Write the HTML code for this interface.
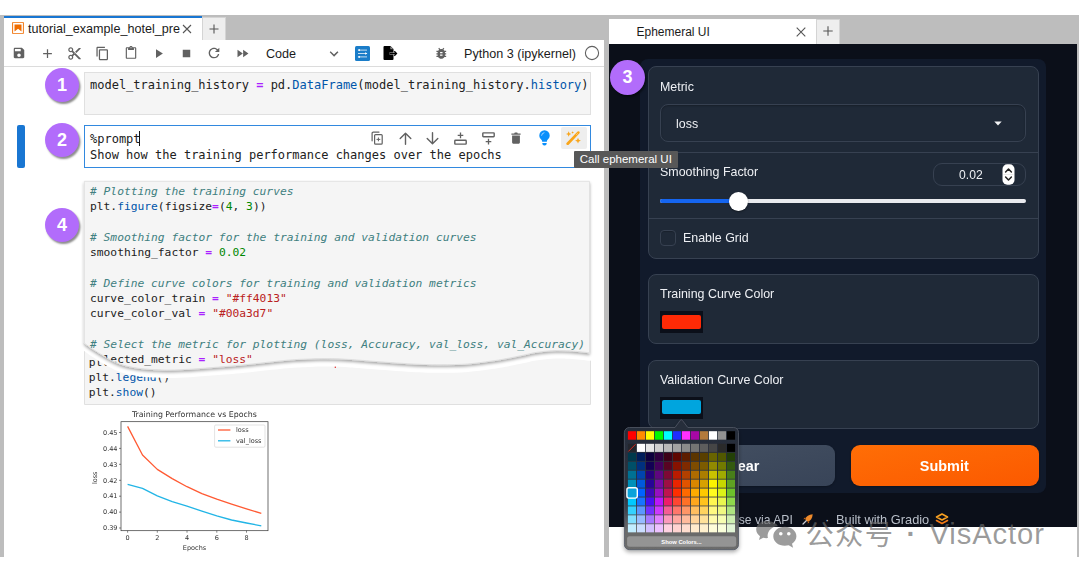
<!DOCTYPE html>
<html lang="en">
<head>
<meta charset="utf-8">
<title>Ephemeral UI</title>
<style>
*{box-sizing:border-box;margin:0;padding:0}
html,body{width:1080px;height:576px;overflow:hidden;background:#fff}
body{position:relative;font-family:"Liberation Sans","Noto Sans CJK SC",sans-serif;color:#212121}
.abs{position:absolute}
#frame{position:absolute;left:0;top:15px;width:1079px;height:542px;background:#bdbdbd;overflow:hidden}
/* ---------- left (JupyterLab) ---------- */
#left{position:absolute;left:4px;top:1px;width:600px;height:541px;background:#fff;overflow:hidden}
#ltabbar{position:absolute;left:0;top:0;width:600px;height:24px;background:#bdbdbd}
#ltab{position:absolute;left:0;top:0;width:198px;height:25px;background:#fff;border-top:2.4px solid #1976d2}
#ltab .ttl{position:absolute;left:24px;top:1.500px;font-size:12.600px;line-height:18px;color:#1b1b1b;white-space:nowrap}
#lplus{position:absolute;left:198px;top:1px;width:24px;height:23px;background:#eee;border:1px solid #d4d4d4;border-bottom:none}
#ltool{position:absolute;left:0;top:24px;width:600px;height:27px;background:#fff;border-bottom:1px solid #dcdcdc}
.tbtxt{position:absolute;font-size:12.600px;line-height:16px;color:#1b1b1b;white-space:nowrap}
.ico{position:absolute;display:block}
.cell{position:absolute;left:80px;width:507px;background:#f5f5f5;border:1px solid #e0e0e0}
.code{position:absolute;font-family:"DejaVu Sans Mono","Liberation Mono",monospace;font-size:12px;line-height:15.25px;white-space:pre;color:#212121;letter-spacing:0px}
.c3{font-size:11.270px}
.c{color:#408080;font-style:italic}
.o{color:#aa22ff;font-weight:bold}
.p{color:#0055aa}
.n{color:#008800}
.s{color:#ba2121}
.badge{position:absolute;width:34px;height:34px;border-radius:50%;background:#b26cfb;color:#fff;font-weight:bold;font-size:18px;line-height:35px;text-align:center;box-shadow:1.5px 2px 2px rgba(0,0,0,.45)}
/* ---------- right (Gradio) ---------- */
#right{position:absolute;left:609px;top:4px;width:468px;height:538px;background:#fff;overflow:hidden}
#rtabbar{position:absolute;left:0;top:0;width:468px;height:25px;background:#bdbdbd}
#rtab{position:absolute;left:0;top:0;width:207px;height:25px;background:#fff}
#rtab .ttl{position:absolute;left:27.500px;top:3.500px;font-size:12px;line-height:18px;color:#1b1b1b;white-space:nowrap}
#rplus{position:absolute;left:207px;top:0px;width:24px;height:25px;background:#eee;border:1px solid #d4d4d4;border-bottom:none}
#gr{position:absolute;left:0;top:24.500px;width:468px;height:483px;background:#0b0f19;overflow:hidden;color:#f3f4f6}
#gform{position:absolute;left:31px;top:15.200px;width:405.500px;height:434.300px;background:#111a2b;border-radius:8px}
.blk{position:absolute;left:7.500px;width:391.300px;background:#1f2937;border:1px solid #374151;border-radius:8px}
.hr{position:absolute;left:0;width:100%;height:1px;background:#374151}
.lbl{position:absolute;left:11.200px;font-size:13.300px;line-height:18px;color:#eef0f4;white-space:nowrap;transform:scaleX(.935);transform-origin:0 50%}
.gbtn{position:absolute;height:41.200px;border-radius:9px;color:#fff;font-weight:bold;font-size:15.500px;line-height:41.600px;text-align:center;box-shadow:0 1px 2px rgba(0,0,0,.25)}
.gbtn span{display:inline-block;transform:scaleX(.93)}
</style>
</head>
<body>
<div id="frame">
  <div id="left">
    <div id="ltabbar">
      <div id="ltab">
        <svg class="ico" style="left:7px;top:3px" width="14" height="14" viewBox="0 0 22 22"><path fill="#ef6c00" d="M18.7 3.3v15.4H3.3V3.3h15.4m1.5-1.5H1.8v18.3h18.3l.1-18.3z"/><path fill="#ef6c00" d="M16.5 16.5l-5.4-4.3-5.6 4.3v-11h11z"/></svg>
        <span class="ttl">tutorial_example_hotel_pre</span>
        <svg class="ico" style="left:178px;top:6px" width="10" height="10" viewBox="0 0 10 10"><path d="M1 1L9 9M9 1L1 9" stroke="#555" stroke-width="1.1" fill="none"/></svg>
      </div>
      <div id="lplus"><svg class="ico" style="left:6px;top:6px" width="10" height="10" viewBox="0 0 10 10"><path d="M5 .5V9.5M.5 5H9.5" stroke="#555" stroke-width="1.1" fill="none"/></svg></div>
    </div>
    <div id="ltool">
      <svg class="ico" style="left:8px;top:6px" width="14" height="14" viewBox="0 0 24 24"><path fill="#616161" d="M17 3H5c-1.11 0-2 .9-2 2v14c0 1.1.89 2 2 2h14c1.1 0 2-.9 2-2V7l-4-4zm-5 16c-1.66 0-3-1.34-3-3s1.34-3 3-3 3 1.34 3 3-1.34 3-3 3zm3-10H5V5h10v4z"/></svg>
      <svg class="ico" style="left:35.5px;top:5.5px" width="15" height="15" viewBox="0 0 24 24"><path fill="#616161" d="M19 13h-6v6h-2v-6H5v-2h6V5h2v6h6v2z"/></svg>
      <svg class="ico" style="left:63px;top:5.5px" width="15" height="15" viewBox="0 0 24 24"><path fill="#616161" d="M9.64 7.64c.23-.5.36-1.05.36-1.64 0-2.21-1.79-4-4-4S2 3.790 2 6s1.79 4 4 4c.59 0 1.14-.13 1.64-.36L10 12l-2.36 2.360C7.14 14.13 6.590 14 6 14c-2.21 0-4 1.79-4 4s1.79 4 4 4 4-1.79 4-4c0-.59-.13-1.14-.36-1.64L12 14l7 7h3v-1L9.640 7.640zM6 8c-1.1 0-2-.89-2-2s.9-2 2-2 2 .89 2 2-.9 2-2 2zm0 12c-1.1 0-2-.89-2-2s.9-2 2-2 2 .89 2 2-.9 2-2 2zm6-7.5c-.28 0-.5-.22-.5-.5s.22-.5.5-.5.5.22.5.5-.22.5-.5.5zM19 3l-6 6 2 2 7-7V3z"/></svg>
      <svg class="ico" style="left:90.5px;top:5.5px" width="15" height="15" viewBox="0 0 18 18"><path fill="#616161" d="M11.9,1H3.2C2.4,1,1.7,1.7,1.7,2.5v10.2h1.500V2.5h8.7V1z M14.100,3.900h-8c-0.800,0-1.500,0.700-1.500,1.500v10.200c0,0.800,0.700,1.500,1.500,1.500h8 c0.800,0,1.500-0.700,1.500-1.500V5.400C15.500,4.600,14.900,3.900,14.100,3.900z M14.100,15.500h-8V5.400h8V15.500z"/></svg>
      <svg class="ico" style="left:119.5px;top:6px" width="14" height="14" viewBox="0 0 24 24"><path fill="#616161" d="M19 2h-4.180C14.4.84 13.3 0 12 0c-1.300 0-2.400.84-2.820 2H5c-1.100 0-2 .9-2 2v16c0 1.100.9 2 2 2h14c1.100 0 2-.9 2-2V4c0-1.100-.9-2-2-2zm-7 0c.55 0 1 .45 1 1s-.45 1-1 1-1-.45-1-1 .45-1 1-1zm7 18H5V4h2v3h10V4h2v16z"/></svg>
      <svg class="ico" style="left:146.5px;top:5.5px" width="15" height="15" viewBox="0 0 24 24"><path fill="#616161" d="M8 5v14l11-7z"/></svg>
      <svg class="ico" style="left:174.5px;top:5.5px" width="15" height="15" viewBox="0 0 24 24"><path fill="#616161" d="M6 6h12v12H6z"/></svg>
      <svg class="ico" style="left:201.7px;top:5px" width="16" height="16" viewBox="0 0 18 18"><path fill="#616161" d="M9 13.5c-2.490 0-4.500-2.010-4.500-4.500S6.510 4.500 9 4.500c1.240 0 2.360.52 3.170 1.330L10 8h5V3l-1.760 1.760C12.150 3.680 10.660 3 9 3 5.690 3 3.010 5.690 3.010 9S5.690 15 9 15c2.970 0 5.430-2.160 5.900-5h-1.520c-.46 2-2.240 3.500-4.380 3.500z"/></svg>
      <svg class="ico" style="left:230.5px;top:5.5px" width="15" height="15" viewBox="0 0 24 24"><path fill="#616161" d="M4 18l8.500-6L4 6v12zm9-12v12l8.500-6L13 6z"/></svg>
      <span class="tbtxt" style="left:262px;top:6px">Code</span>
      <svg class="ico" style="left:322.3px;top:5.5px" width="16" height="16" viewBox="0 0 18 18"><path fill="#616161" d="M5.2,5.900L9,9.700l3.800-3.800l1.200,1.200l-4.900,5l-4.900-5L5.200,5.900z"/></svg>
      <svg class="ico" style="left:350.5px;top:5.5px" width="15" height="15" viewBox="0 0 15 15"><rect width="15" height="15" rx="1.5" fill="#1a7dc9"/><g stroke="#fff" stroke-width=".75" fill="none"><path d="M3 4.100H12M3 7.500H12M3 10.900H12"/></g><path fill="#fff" d="M2.600 4.100l2.300-1.150v2.300zM12.400 7.500l-2.300-1.150v2.300zM2.600 10.900l2.300-1.150v2.300z"/></svg>
      <svg class="ico" style="left:378px;top:5px" width="16" height="16" viewBox="0 0 16 16"><path fill="#000" d="M2.500 1h6l3 3v3.500H7.500v2H11.500V14a1 1 0 0 1-1 1h-8a1 1 0 0 1-1-1V2a1 1 0 0 1 1-1z"/><path fill="#fff" d="M8.300 1.300v3h3z" opacity=".55"/><path d="M7.500 8.500H14.300M12.300 6.300l2.200 2.200-2.200 2.200" stroke="#000" stroke-width="1.300" fill="none"/></svg>
      <svg class="ico" style="left:429.700px;top:5.700px" width="14.600" height="14.600" viewBox="0 0 24 24"><path fill="#616161" d="M20 8h-2.810c-.45-.78-1.070-1.450-1.820-1.960L17 4.410 15.590 3l-2.170 2.170C12.960 5.060 12.490 5 12 5c-.49 0-.96.06-1.410.17L8.410 3 7 4.410l1.620 1.630C7.880 6.550 7.260 7.220 6.810 8H4v2h2.090c-.05.33-.09.66-.09 1v1H4v2h2v1c0 .34.04.67.09 1H4v2h2.810c1.040 1.790 2.970 3 5.190 3s4.150-1.210 5.190-3H20v-2h-2.090c.05-.33.09-.66.09-1v-1h2v-2h-2v-1c0-.34-.04-.67-.09-1H20V8zm-6 8h-4v-2h4v2zm0-4h-4v-2h4v2z"/></svg>
      <span class="tbtxt" style="left:460px;top:6px">Python 3 (ipykernel)</span>
      <svg class="ico" style="left:580px;top:5px" width="16" height="16" viewBox="0 0 16 16"><circle cx="8" cy="8" r="6.600" fill="none" stroke="#616161" stroke-width="1.100"/></svg>
    </div>
    <!-- cell 1 -->
    <div class="cell" style="top:56px;height:43px"></div>
    <div class="code" style="left:86px;top:62px">model_training_history <span class="o">=</span> pd.<span class="p">DataFrame</span>(model_training_history.<span class="p">history</span>)</div>
    <div class="badge" style="left:41px;top:52px">1</div>
    <!-- cell 2 (active) -->
    <div class="abs" style="left:13px;top:109px;width:8px;height:43px;background:#1976d2;border-radius:2px"></div>
    <div class="cell" style="top:109px;height:43px;background:#fff;border-color:#3289df"></div>
    <div class="code" style="left:86px;top:115px;line-height:16.400px">%prompt
Show how the training performance changes over the epochs</div>
    <div class="abs" style="left:135px;top:115px;width:1px;height:15px;background:#111"></div>
    <div class="badge" style="left:41px;top:107px">2</div>
    <div class="abs" style="left:557px;top:111.300px;width:25.700px;height:21.400px;background:#eee;border-radius:2px"></div>
    <svg class="ico" style="left:367.3px;top:115.3px" width="12" height="14" viewBox="0 0 12 14"><path d="M1.100 9.800V2.200A1.100 1.100 0 0 1 2.200 1.100H8" fill="none" stroke="#616161" stroke-width="1.200" stroke-linecap="round"/><rect x="3.600" y="3.600" width="7.600" height="9.600" rx="1" fill="none" stroke="#616161" stroke-width="1.200"/><path d="M7.400 6.500V10.300M5.500 8.400H9.300" stroke="#616161" stroke-width="1" fill="none"/></svg>
    <svg class="ico" style="left:394.5px;top:115.7px" width="13" height="13" viewBox="0 0 13 13"><path d="M6.500 12.300V1.500M1.200 6.600L6.500 1.300L11.800 6.600" fill="none" stroke="#616161" stroke-width="1.400" stroke-linecap="round" stroke-linejoin="round"/></svg>
    <svg class="ico" style="left:422.3px;top:115.7px" width="13" height="13" viewBox="0 0 13 13"><path d="M6.500 .7V11.500M1.200 6.400L6.500 11.700L11.800 6.400" fill="none" stroke="#616161" stroke-width="1.400" stroke-linecap="round" stroke-linejoin="round"/></svg>
    <svg class="ico" style="left:450.2px;top:116.2px" width="13" height="13" viewBox="0 0 13 13"><path d="M6.500 .6V6.200M3.700 3.400H9.300" stroke="#616161" stroke-width="1.300" fill="none"/><rect x=".8" y="8.300" width="11.400" height="3.800" rx=".6" fill="none" stroke="#616161" stroke-width="1.400"/></svg>
    <svg class="ico" style="left:477.9px;top:116.3px" width="13" height="13" viewBox="0 0 13 13"><path d="M6.500 6.800V12.400M3.700 9.600H9.300" stroke="#616161" stroke-width="1.300" fill="none"/><rect x=".8" y=".9" width="11.400" height="3.800" rx=".6" fill="none" stroke="#616161" stroke-width="1.400"/></svg>
    <svg class="ico" style="left:507.3px;top:116.0px" width="10" height="12" viewBox="0 0 10 12"><path fill="#616161" d="M.4 1.500H3.200L3.800 .6H6.200L6.800 1.500H9.600V2.700H.4Z"/><path fill="#616161" d="M1.100 3.500H8.900V10.600A1.100 1.100 0 0 1 7.800 11.700H2.200A1.100 1.100 0 0 1 1.100 10.600Z"/></svg>
    <svg class="ico" style="left:534.5px;top:114.3px" width="11" height="16" viewBox="0 0 11 16"><path fill="#0a8ffb" d="M5.500 .3A5.200 5.200 0 0 0 .3 5.500C.3 7.300 1.200 8.700 2.400 9.700C2.900 10.200 3.100 10.700 3.100 11.300V11.800H7.900V11.300C7.900 10.700 8.100 10.200 8.600 9.700C9.800 8.700 10.700 7.300 10.700 5.500A5.200 5.200 0 0 0 5.500 .3Z"/><path fill="#0a8ffb" d="M3.300 13H7.700V13.600A2 2 0 0 1 5.700 15.500H5.300A2 2 0 0 1 3.300 13.600Z"/><path d="M2.600 5.300A2.900 2.900 0 0 1 5 2.700" stroke="#cfe9ff" stroke-width=".9" fill="none" stroke-linecap="round" opacity=".85"/></svg>
    <svg class="ico" style="left:561.8px;top:115.3px" width="15" height="14" viewBox="0 0 15 14"><path d="M1.700 12.700L12.300 1.600" stroke="#f9a51a" stroke-width="2.700" stroke-linecap="round" fill="none"/><path d="M10.300 3.800L11.600 2.400" stroke="#fff" stroke-width=".7" fill="none" opacity=".7"/><path fill="#f9a51a" d="M2.700 .3L3.500 2.200L5.400 3L3.500 3.800L2.700 5.700L1.900 3.800L0 3L1.900 2.200Z"/><path fill="#f9a51a" d="M6.600 .2L7 1.100L7.900 1.500L7 1.900L6.600 2.800L6.200 1.900L5.300 1.500L6.200 1.100Z"/><path fill="#f9a51a" d="M12 6.800L12.850 8.850L14.900 9.700L12.850 10.550L12 12.600L11.150 10.550L9.100 9.700L11.150 8.850Z"/></svg>
    <!-- cell 3 bottom sheet -->
    <svg class="ico" style="left:-4px;top:-16px" width="608" height="560" viewBox="0 0 608 560"><path d="M84.5 346H590.5V404.5H84.5Z" fill="#f5f5f5" stroke="#e0e0e0" stroke-width="1"/></svg>
    <div class="code c3" style="left:84.700px;top:338.800px" id="codeB">plt.<span class="p">plot</span>(history_df)
plt.<span class="p">legend</span>()
plt.<span class="p">show</span>()</div>
    <!-- cell 3 top sheet -->
    <svg class="ico" style="left:-4px;top:-16px" width="608" height="560" viewBox="0 0 608 560">
      <defs><filter id="sh" x="-5%" y="-5%" width="110%" height="115%"><feGaussianBlur in="SourceAlpha" stdDeviation="1.400"/><feOffset dx="0" dy="1.700"/><feComponentTransfer><feFuncA type="linear" slope="0.34"/></feComponentTransfer><feMerge><feMergeNode/><feMergeNode in="SourceGraphic"/></feMerge></filter></defs>
      <path d="M80 340V352L84.3 351.0C85.2 351.7 87.7 353.7 90.0 355.3C92.3 356.9 95.7 358.9 98.0 360.4C100.3 361.8 101.2 362.4 104.0 364.0C106.8 365.6 111.5 368.4 115.0 370.0C118.5 371.6 121.3 372.6 125.0 373.6C128.7 374.6 132.2 375.3 137.0 376.0C141.8 376.7 148.5 377.3 154.0 377.6C159.5 377.9 164.0 378.1 170.0 378.0C176.0 377.9 182.5 377.6 190.0 377.2C197.5 376.8 205.8 376.1 215.0 375.3C224.2 374.6 233.0 373.9 245.0 372.7C257.0 371.5 276.2 369.2 287.0 368.2C297.8 367.2 303.0 367.2 310.0 366.9C317.0 366.6 322.3 366.5 329.0 366.6C335.7 366.7 343.2 367.0 350.0 367.4C356.8 367.8 359.7 368.2 370.0 369.0C380.3 369.8 400.3 371.3 412.0 371.9C423.7 372.5 430.7 372.7 440.0 372.7C449.3 372.7 459.7 372.5 468.0 371.9C476.3 371.3 484.3 369.9 490.0 369.2C495.7 368.4 496.3 368.4 502.0 367.4C507.7 366.4 518.3 364.2 524.0 363.0C529.7 361.8 531.3 361.1 536.0 360.4C540.7 359.7 546.5 359.0 552.0 358.7C557.5 358.4 564.3 358.6 569.0 358.8C573.7 359.0 576.6 359.4 580.0 359.7C583.4 360.0 587.9 360.6 589.5 360.8L600 360V340Z" fill="#fff"/>
      <circle cx="335.300" cy="367.200" r="0.700" fill="#e02020"/>
      <path d="M84.300 181.300V343L84.3 343.0C85.2 343.7 87.7 345.7 90.0 347.3C92.3 348.9 95.7 350.9 98.0 352.4C100.3 353.8 101.2 354.4 104.0 356.0C106.8 357.6 111.5 360.4 115.0 362.0C118.5 363.6 121.3 364.6 125.0 365.6C128.7 366.6 132.2 367.3 137.0 368.0C141.8 368.7 148.5 369.3 154.0 369.6C159.5 369.9 164.0 370.1 170.0 370.0C176.0 369.9 182.5 369.6 190.0 369.2C197.5 368.8 205.8 368.1 215.0 367.3C224.2 366.6 233.0 365.9 245.0 364.7C257.0 363.5 276.2 361.2 287.0 360.2C297.8 359.2 303.0 359.2 310.0 358.9C317.0 358.6 322.3 358.5 329.0 358.6C335.7 358.7 343.2 359.0 350.0 359.4C356.8 359.8 359.7 360.2 370.0 361.0C380.3 361.8 400.3 363.3 412.0 363.9C423.7 364.5 430.7 364.7 440.0 364.7C449.3 364.7 459.7 364.5 468.0 363.9C476.3 363.3 484.3 361.9 490.0 361.2C495.7 360.4 496.3 360.4 502.0 359.4C507.7 358.4 518.3 356.2 524.0 355.0C529.7 353.8 531.3 353.1 536.0 352.4C540.7 351.7 546.5 351.0 552.0 350.7C557.5 350.4 564.3 350.6 569.0 350.8C573.7 351.0 576.6 351.4 580.0 351.7C583.4 352.0 587.9 352.6 589.5 352.8V181.300Z" fill="#f5f5f5" stroke="#dedede" stroke-width="0.800" filter="url(#sh)"/>
    </svg>
    <div class="abs" style="left:-4px;top:-16px;width:608px;height:560px;clip-path:path('M84.300 181.300V343L84.3 343.0C85.2 343.7 87.7 345.7 90.0 347.3C92.3 348.9 95.7 350.9 98.0 352.4C100.3 353.8 101.2 354.4 104.0 356.0C106.8 357.6 111.5 360.4 115.0 362.0C118.5 363.6 121.3 364.6 125.0 365.6C128.7 366.6 132.2 367.3 137.0 368.0C141.8 368.7 148.5 369.3 154.0 369.6C159.5 369.9 164.0 370.1 170.0 370.0C176.0 369.9 182.5 369.6 190.0 369.2C197.5 368.8 205.8 368.1 215.0 367.3C224.2 366.6 233.0 365.9 245.0 364.7C257.0 363.5 276.2 361.2 287.0 360.2C297.8 359.2 303.0 359.2 310.0 358.9C317.0 358.6 322.3 358.5 329.0 358.6C335.7 358.7 343.2 359.0 350.0 359.4C356.8 359.8 359.7 360.2 370.0 361.0C380.3 361.8 400.3 363.3 412.0 363.9C423.7 364.5 430.7 364.7 440.0 364.7C449.3 364.7 459.7 364.5 468.0 363.9C476.3 363.3 484.3 361.9 490.0 361.2C495.7 360.4 496.3 360.4 502.0 359.4C507.7 358.4 518.3 356.2 524.0 355.0C529.7 353.8 531.3 353.1 536.0 352.4C540.7 351.7 546.5 351.0 552.0 350.7C557.5 350.4 564.3 350.6 569.0 350.8C573.7 351.0 576.6 351.4 580.0 351.7C583.4 352.0 587.9 352.6 589.5 352.8V181.300Z')"><div class="code c3" style="left:90px;top:184.100px" id="codeA"><span class="c"># Plotting the training curves</span>
plt.<span class="p">figure</span>(figsize<span class="o">=</span>(<span class="n">4</span>, <span class="n">3</span>))

<span class="c"># Smoothing factor for the training and validation curves</span>
smoothing_factor <span class="o">=</span> <span class="n">0.02</span>

<span class="c"># Define curve colors for training and validation metrics</span>
curve_color_train <span class="o">=</span> <span class="s">"#ff4013"</span>
curve_color_val <span class="o">=</span> <span class="s">"#00a3d7"</span>

<span class="c"># Select the metric for plotting (loss, Accuracy, val_loss, val_Accuracy)</span>
selected_metric <span class="o">=</span> <span class="s">"loss"</span></div></div>
    <div class="badge" style="left:41px;top:192px">4</div>
    <svg class="ico" style="left:-4px;top:-16px;filter:blur(.35px)" width="608" height="560" viewBox="0 0 608 560">
      <rect x="121" y="421.700" width="147" height="109" fill="#fff" stroke="#333" stroke-width=".7"/>
      <polyline points="127.6,426.4 142.5,455.0 157.3,469.4 172.2,478.6 187.0,486.7 201.9,493.6 216.8,499.2 231.6,504.2 246.5,508.9 261.3,513.3" fill="none" stroke="#ff5a33" stroke-width="1.300" stroke-linejoin="round"/>
      <polyline points="127.6,484.4 142.5,488.3 157.3,495.8 172.2,501.7 187.0,506.1 201.9,511.1 216.8,515.8 231.6,520.0 246.5,523.0 261.3,525.8" fill="none" stroke="#22b5e6" stroke-width="1.300" stroke-linejoin="round"/>
      <path d="M119 432.5H121" stroke="#333" stroke-width=".6"/>
      <text x="117.500" y="434.7" text-anchor="end" font-size="6.500" fill="#333" font-family="DejaVu Sans, Liberation Sans, sans-serif">0.45</text>
      <path d="M119 448.4H121" stroke="#333" stroke-width=".6"/>
      <text x="117.500" y="450.6" text-anchor="end" font-size="6.500" fill="#333" font-family="DejaVu Sans, Liberation Sans, sans-serif">0.44</text>
      <path d="M119 464.3H121" stroke="#333" stroke-width=".6"/>
      <text x="117.500" y="466.5" text-anchor="end" font-size="6.500" fill="#333" font-family="DejaVu Sans, Liberation Sans, sans-serif">0.43</text>
      <path d="M119 480.3H121" stroke="#333" stroke-width=".6"/>
      <text x="117.500" y="482.5" text-anchor="end" font-size="6.500" fill="#333" font-family="DejaVu Sans, Liberation Sans, sans-serif">0.42</text>
      <path d="M119 496.2H121" stroke="#333" stroke-width=".6"/>
      <text x="117.500" y="498.4" text-anchor="end" font-size="6.500" fill="#333" font-family="DejaVu Sans, Liberation Sans, sans-serif">0.41</text>
      <path d="M119 512.1H121" stroke="#333" stroke-width=".6"/>
      <text x="117.500" y="514.3" text-anchor="end" font-size="6.500" fill="#333" font-family="DejaVu Sans, Liberation Sans, sans-serif">0.40</text>
      <path d="M119 528.0H121" stroke="#333" stroke-width=".6"/>
      <text x="117.500" y="530.2" text-anchor="end" font-size="6.500" fill="#333" font-family="DejaVu Sans, Liberation Sans, sans-serif">0.39</text>
      <path d="M127.6 530.700V532.700" stroke="#333" stroke-width=".6"/>
      <text x="127.6" y="540.300" text-anchor="middle" font-size="6.500" fill="#333" font-family="DejaVu Sans, Liberation Sans, sans-serif">0</text>
      <path d="M157.3 530.700V532.700" stroke="#333" stroke-width=".6"/>
      <text x="157.3" y="540.300" text-anchor="middle" font-size="6.500" fill="#333" font-family="DejaVu Sans, Liberation Sans, sans-serif">2</text>
      <path d="M187.0 530.700V532.700" stroke="#333" stroke-width=".6"/>
      <text x="187.0" y="540.300" text-anchor="middle" font-size="6.500" fill="#333" font-family="DejaVu Sans, Liberation Sans, sans-serif">4</text>
      <path d="M216.8 530.700V532.700" stroke="#333" stroke-width=".6"/>
      <text x="216.8" y="540.300" text-anchor="middle" font-size="6.500" fill="#333" font-family="DejaVu Sans, Liberation Sans, sans-serif">6</text>
      <path d="M246.5 530.700V532.700" stroke="#333" stroke-width=".6"/>
      <text x="246.5" y="540.300" text-anchor="middle" font-size="6.500" fill="#333" font-family="DejaVu Sans, Liberation Sans, sans-serif">8</text>
      <text x="194.400" y="417.300" text-anchor="middle" font-size="7.850" fill="#333" font-family="DejaVu Sans, Liberation Sans, sans-serif">Training Performance vs Epochs</text>
      <text x="194.500" y="550.200" text-anchor="middle" font-size="6.500" fill="#333" font-family="DejaVu Sans, Liberation Sans, sans-serif">Epochs</text>
      <text transform="translate(97.200 477.800) rotate(-90)" text-anchor="middle" font-size="6.500" fill="#333" font-family="DejaVu Sans, Liberation Sans, sans-serif">loss</text>
      <rect x="214.600" y="425" width="50.400" height="22.200" rx="1.200" fill="#fff" stroke="#d0d0d0" stroke-width=".6"/>
      <path d="M218 430H230.400" stroke="#ff5a33" stroke-width="1.300"/><path d="M218 440.800H230.400" stroke="#22b5e6" stroke-width="1.300"/>
      <text x="236" y="432.200" font-size="6.500" fill="#333" font-family="DejaVu Sans, Liberation Sans, sans-serif">loss</text><text x="236" y="443" font-size="6.500" fill="#333" font-family="DejaVu Sans, Liberation Sans, sans-serif">val_loss</text>
    </svg>
  </div>
  <div id="right">
    <div id="rtabbar">
      <div id="rtab"><span class="ttl">Ephemeral UI</span>
        <svg class="ico" style="left:186.500px;top:7.500px" width="10" height="10" viewBox="0 0 10 10"><path d="M.7 .7L9.300 9.300M9.300 .7L.7 9.300" stroke="#555" stroke-width="1.100" fill="none"/></svg>
      </div>
      <div id="rplus"><svg class="ico" style="left:6px;top:6px" width="10" height="10" viewBox="0 0 10 10"><path d="M5 .3V9.700M.3 5H9.700" stroke="#555" stroke-width="1.100" fill="none"/></svg></div>
    </div>
    <div id="gr">
      <div id="gform">
        <div class="blk" style="top:7.3px;height:193px">
          <span class="lbl" style="top:11.0px">Metric</span>
          <div class="abs" style="left:11.500px;top:37.5px;width:365.500px;height:37.500px;border:1px solid #374151;border-radius:8px;background:#1f2937;box-shadow:inset 0 1px 2px rgba(0,0,0,.25)"></div>
          <span class="lbl" style="left:27.500px;top:47.7px">loss</span>
          <svg class="ico" style="left:345px;top:54.2px" width="8" height="5" viewBox="0 0 8 5"><path d="M.3 .5H7.700L4 4.600Z" fill="#f3f4f6"/></svg>
          <div class="hr" style="top:85.0px"></div>
          <span class="lbl" style="top:96.5px">Smoothing Factor</span>
          <div class="abs" style="left:284px;top:96.0px;width:93px;height:23.400px;border:1px solid #374151;border-radius:9px;background:#1f2937"></div>
          <span class="lbl" style="left:310.500px;top:99.0px;font-size:13px">0.02</span>
          <svg class="ico" style="left:353.500px;top:97.0px" width="13" height="21" viewBox="0 0 13 21"><rect x=".5" y=".3" width="12" height="20.400" rx="4.800" fill="#fff"/><path d="M1.500 10.500H11.500" stroke="#ddd" stroke-width=".6"/><path d="M3.600 8L6.500 5L9.400 8M3.600 13L6.500 16L9.400 13" fill="none" stroke="#222" stroke-width="1.500" stroke-linecap="round" stroke-linejoin="round"/></svg>
          <div class="abs" style="left:11.500px;top:132.0px;width:365.500px;height:4.400px;border-radius:3px;background:#e9eaee"></div>
          <div class="abs" style="left:11.500px;top:132.0px;width:80px;height:4.400px;border-radius:3px;background:#1565f0"></div>
          <div class="abs" style="left:80.8px;top:124.8px;width:18.800px;height:18.800px;border-radius:50%;background:#fff;box-shadow:0 1px 2px rgba(0,0,0,.4)"></div>
          <div class="hr" style="top:151.0px"></div>
          <div class="abs" style="left:11.500px;top:163.5px;width:15.500px;height:15.500px;border:1px solid #374151;border-radius:4px;background:#1f2937;box-shadow:inset 0 1px 1px rgba(0,0,0,.2)"></div>
          <span class="lbl" style="left:34.700px;top:162.0px">Enable Grid</span>
        </div>
        <div class="blk" style="top:215.8px;height:69.300px">
          <span class="lbl" style="top:10.0px">Training Curve Color</span>
          <div class="abs" style="left:11.500px;top:35.5px;width:42.500px;height:22px;background:#0b0f19"></div>
          <div class="abs" style="left:13.300px;top:39.5px;width:39.200px;height:14px;background:#ff2a06;border-radius:2px"></div>
        </div>
        <div class="blk" style="top:301.3px;height:69px">
          <span class="lbl" style="top:10.0px">Validation Curve Color</span>
          <div class="abs" style="left:11.500px;top:35.8px;width:42.500px;height:22px;background:#0b0f19"></div>
          <div class="abs" style="left:13.300px;top:39.3px;width:39.200px;height:14px;background:#00a5de;border-radius:2px"></div>
        </div>
        <div class="gbtn" style="left:7.500px;top:386.3px;width:187.500px;background:linear-gradient(to bottom right,#445062,#384458)"><span>Clear</span></div>
        <div class="gbtn" style="left:210.500px;top:386.3px;width:188.300px;background:linear-gradient(to bottom right,#ff6e06,#fb5900)"><span>Submit</span></div>
      </div>
      <div class="badge" style="left:1px;top:16px;width:35px;height:35px">3</div>
      <div class="abs" style="left:120.500px;top:467px;font-size:13px;line-height:18px;color:#b9bfc9;white-space:nowrap;transform:scaleX(.935);transform-origin:0 50%">Use via API</div>
      <svg class="ico" style="left:192px;top:469px" width="13" height="13" viewBox="0 0 13 13"><path d="M2 11L5.500 7.500" stroke="#c9ccd2" stroke-width="1.300" stroke-linecap="round"/><path d="M4.200 6.200L6.800 8.800C9.500 8 11.500 5.500 11.700 1.300C8 1.500 5 3.500 4.200 6.200Z" fill="#ef8a2b"/><path d="M4.400 6L2.300 6.300L4.200 4.300ZM7 8.600L6.700 10.700L8.700 8.800Z" fill="#d96a12"/></svg>
      <div class="abs" style="left:216px;top:467px;font-size:13px;line-height:18px;color:#b9bfc9">·</div>
      <div class="abs" style="left:227px;top:467px;font-size:13px;line-height:18px;color:#b9bfc9;white-space:nowrap;transform:scaleX(.985);transform-origin:0 50%">Built with Gradio</div>
      <svg class="ico" style="left:326px;top:469.500px" width="14" height="13" viewBox="0 0 14 13"><path d="M7 1L12.500 4L7 7L1.500 4Z" fill="none" stroke="#f7a022" stroke-width="1.600" stroke-linejoin="round"/><path d="M1.500 7.500L7 10.500L12.500 7.500" fill="none" stroke="#f37a16" stroke-width="1.600" stroke-linejoin="round" stroke-linecap="round"/></svg>
    </div>
  </div>
<div class="abs" style="left:574.200px;top:135.600px;width:103.600px;height:17.200px;background:#585858;border-radius:1px;color:#fff;font-size:11.500px;line-height:17.500px;padding-left:5.600px;white-space:nowrap;z-index:50">Call ephemeral UI</div>
<div class="abs" style="left:0;top:511.6px;width:1079px;height:30.400px;z-index:40">
<div class="abs" style="left:805.500px;top:-9px;font-size:28.300px;line-height:34px;color:rgba(104,104,104,.66);white-space:nowrap;z-index:40;letter-spacing:1.300px;font-family:'Liberation Sans','Noto Sans CJK SC',sans-serif">公众号</div>
<div class="abs" style="left:906.500px;top:-9.300px;font-size:27.800px;font-weight:bold;line-height:34px;color:rgba(104,104,104,.66);white-space:nowrap;z-index:40;font-family:'Liberation Sans','Noto Sans CJK SC',sans-serif">·</div>
<div class="abs" style="left:929.500px;top:-10.1px;font-size:29.200px;line-height:34px;color:rgba(104,104,104,.66);white-space:nowrap;z-index:40;letter-spacing:.9px">VisActor</div>
<svg class="ico" style="left:754.500px;top:-6.6px;z-index:40" width="44" height="30" viewBox="0 0 44 30"><g fill="rgba(104,104,104,.66)"><path d="M11.300 1C5.500 1 1.200 4.900 1.200 9.600C1.200 12.300 2.700 14.700 5 16.300L4 20L8.200 17.700C9.200 18 10.300 18.200 11.500 18.200C12 18.200 12.500 18.200 13 18.100C12.700 17.300 12.600 16.500 12.600 15.700C12.600 10.600 17.100 6.400 22.900 6.200C21.400 3.100 16.900 1 11.300 1Z"/><path d="M29.800 6.800C23.300 6.800 18.300 11 18.300 16.300C18.300 21.600 23.300 25.800 29.800 25.800C31.200 25.800 32.500 25.600 33.700 25.300L38.100 27.700L37 23.800C39.600 22.100 41.400 19.400 41.400 16.300C41.400 11 36.300 6.800 29.800 6.800Z"/></g><circle cx="25.800" cy="13.800" r="1.800" fill="#fff"/><circle cx="33.800" cy="13.800" r="1.800" fill="#fff"/></svg>
</div>
<svg class="ico" style="left:0;top:-15px;z-index:60" width="1080" height="576" viewBox="0 0 1080 576">
<defs><linearGradient id="pbg" x1="0" y1="427" x2="0" y2="550" gradientUnits="userSpaceOnUse"><stop offset="0" stop-color="#272d3a"/><stop offset=".55" stop-color="#2d323e"/><stop offset=".68" stop-color="#41454e"/><stop offset=".78" stop-color="#5d5e62"/><stop offset=".85" stop-color="#6a6a6a"/><stop offset="1" stop-color="#6c6c6c"/></linearGradient><filter id="psh" x="-10%" y="-10%" width="120%" height="125%"><feGaussianBlur in="SourceAlpha" stdDeviation="2.200"/><feOffset dy="2"/><feComponentTransfer><feFuncA type="linear" slope=".35"/></feComponentTransfer><feMerge><feMergeNode/><feMergeNode in="SourceGraphic"/></feMerge></filter></defs>
<path filter="url(#psh)" d="M629.400 427.500H675L680.300 420.300Q681.300 419.200 682.300 420.300L687.800 427.500H733.500A5 5 0 0 1 738.500 432.500V544.700A5 5 0 0 1 733.500 549.700H629.400A5 5 0 0 1 624.400 544.700V432.500A5 5 0 0 1 629.400 427.500Z" fill="url(#pbg)" stroke="#525866" stroke-width=".8"/>
<rect x="627.90" y="431.200" width="8.200" height="8.500" fill="#ff0000"/>
<rect x="636.90" y="431.200" width="8.200" height="8.500" fill="#ff8c00"/>
<rect x="645.90" y="431.200" width="8.200" height="8.500" fill="#ffff00"/>
<rect x="654.90" y="431.200" width="8.200" height="8.500" fill="#00f900"/>
<rect x="663.90" y="431.200" width="8.200" height="8.500" fill="#00fdff"/>
<rect x="672.90" y="431.200" width="8.200" height="8.500" fill="#1f2bff"/>
<rect x="681.90" y="431.200" width="8.200" height="8.500" fill="#ff2fff"/>
<rect x="690.90" y="431.200" width="8.200" height="8.500" fill="#a708a5"/>
<rect x="699.90" y="431.200" width="8.200" height="8.500" fill="#b37a3c"/>
<rect x="708.90" y="431.200" width="8.200" height="8.500" fill="#ffffff"/>
<rect x="717.90" y="431.200" width="8.200" height="8.500" fill="#929292"/>
<rect x="726.90" y="431.200" width="8.200" height="8.500" fill="#000000"/>
<rect x="627.90" y="443.800" width="8.200" height="8.100" fill="#23262d"/><path d="M628.30 451.50L635.60 444.20" stroke="#e8281c" stroke-width=".9"/>
<rect x="636.90" y="443.800" width="8.200" height="8.100" fill="#ffffff"/>
<rect x="645.90" y="443.800" width="8.200" height="8.100" fill="#e6e6e6"/>
<rect x="654.90" y="443.800" width="8.200" height="8.100" fill="#cfcfcf"/>
<rect x="663.90" y="443.800" width="8.200" height="8.100" fill="#b9b9b9"/>
<rect x="672.90" y="443.800" width="8.200" height="8.100" fill="#a2a2a2"/>
<rect x="681.90" y="443.800" width="8.200" height="8.100" fill="#8b8b8b"/>
<rect x="690.90" y="443.800" width="8.200" height="8.100" fill="#747474"/>
<rect x="699.90" y="443.800" width="8.200" height="8.100" fill="#5d5d5d"/>
<rect x="708.90" y="443.800" width="8.200" height="8.100" fill="#464646"/>
<rect x="717.90" y="443.800" width="8.200" height="8.100" fill="#2a2a2a"/>
<rect x="726.90" y="443.800" width="8.200" height="8.100" fill="#000000"/>
<rect x="627.90" y="452.80" width="8.100" height="8.100" fill="#00394c"/>
<rect x="636.90" y="452.80" width="8.100" height="8.100" fill="#001d5a"/>
<rect x="645.90" y="452.80" width="8.100" height="8.100" fill="#0e003d"/>
<rect x="654.90" y="452.80" width="8.100" height="8.100" fill="#2e003f"/>
<rect x="663.90" y="452.80" width="8.100" height="8.100" fill="#3e0017"/>
<rect x="672.90" y="452.80" width="8.100" height="8.100" fill="#5f0600"/>
<rect x="681.90" y="452.80" width="8.100" height="8.100" fill="#5d1d00"/>
<rect x="690.90" y="452.80" width="8.100" height="8.100" fill="#5b3500"/>
<rect x="699.90" y="452.80" width="8.100" height="8.100" fill="#593f00"/>
<rect x="708.90" y="452.80" width="8.100" height="8.100" fill="#696400"/>
<rect x="717.90" y="452.80" width="8.100" height="8.100" fill="#515800"/>
<rect x="726.90" y="452.80" width="8.100" height="8.100" fill="#234007"/>
<rect x="627.90" y="461.73" width="8.100" height="8.100" fill="#004f68"/>
<rect x="636.90" y="461.73" width="8.100" height="8.100" fill="#00307f"/>
<rect x="645.90" y="461.73" width="8.100" height="8.100" fill="#130054"/>
<rect x="654.90" y="461.73" width="8.100" height="8.100" fill="#44005c"/>
<rect x="663.90" y="461.73" width="8.100" height="8.100" fill="#580422"/>
<rect x="672.90" y="461.73" width="8.100" height="8.100" fill="#871200"/>
<rect x="681.90" y="461.73" width="8.100" height="8.100" fill="#7f2a00"/>
<rect x="690.90" y="461.73" width="8.100" height="8.100" fill="#7e4c00"/>
<rect x="699.90" y="461.73" width="8.100" height="8.100" fill="#7c5b00"/>
<rect x="708.90" y="461.73" width="8.100" height="8.100" fill="#918a00"/>
<rect x="717.90" y="461.73" width="8.100" height="8.100" fill="#727a00"/>
<rect x="726.90" y="461.73" width="8.100" height="8.100" fill="#345a0f"/>
<rect x="627.90" y="470.66" width="8.100" height="8.100" fill="#007193"/>
<rect x="636.90" y="470.66" width="8.100" height="8.100" fill="#0044ae"/>
<rect x="645.90" y="470.66" width="8.100" height="8.100" fill="#27007b"/>
<rect x="654.90" y="470.66" width="8.100" height="8.100" fill="#5f0680"/>
<rect x="663.90" y="470.66" width="8.100" height="8.100" fill="#7d0934"/>
<rect x="672.90" y="470.66" width="8.100" height="8.100" fill="#ba1b00"/>
<rect x="681.90" y="470.66" width="8.100" height="8.100" fill="#b24000"/>
<rect x="690.90" y="470.66" width="8.100" height="8.100" fill="#ae6b00"/>
<rect x="699.90" y="470.66" width="8.100" height="8.100" fill="#ab7e00"/>
<rect x="708.90" y="470.66" width="8.100" height="8.100" fill="#cac200"/>
<rect x="717.90" y="470.66" width="8.100" height="8.100" fill="#9faa00"/>
<rect x="726.90" y="470.66" width="8.100" height="8.100" fill="#487e19"/>
<rect x="627.90" y="479.59" width="8.100" height="8.100" fill="#0090b9"/>
<rect x="636.90" y="479.59" width="8.100" height="8.100" fill="#0059dc"/>
<rect x="645.90" y="479.59" width="8.100" height="8.100" fill="#270498"/>
<rect x="654.90" y="479.59" width="8.100" height="8.100" fill="#770ba3"/>
<rect x="663.90" y="479.59" width="8.100" height="8.100" fill="#9e0f44"/>
<rect x="672.90" y="479.59" width="8.100" height="8.100" fill="#e92500"/>
<rect x="681.90" y="479.59" width="8.100" height="8.100" fill="#e15300"/>
<rect x="690.90" y="479.59" width="8.100" height="8.100" fill="#d98700"/>
<rect x="699.90" y="479.59" width="8.100" height="8.100" fill="#d7a100"/>
<rect x="708.90" y="479.59" width="8.100" height="8.100" fill="#fcf300"/>
<rect x="717.90" y="479.59" width="8.100" height="8.100" fill="#c7d700"/>
<rect x="726.90" y="479.59" width="8.100" height="8.100" fill="#5fa222"/>
<rect x="627.90" y="488.52" width="8.100" height="8.100" fill="#00a6de"/>
<rect x="636.90" y="488.52" width="8.100" height="8.100" fill="#0062ff"/>
<rect x="645.90" y="488.52" width="8.100" height="8.100" fill="#3d08b7"/>
<rect x="654.90" y="488.52" width="8.100" height="8.100" fill="#9610c2"/>
<rect x="663.90" y="488.52" width="8.100" height="8.100" fill="#bf144f"/>
<rect x="672.90" y="488.52" width="8.100" height="8.100" fill="#ff2f00"/>
<rect x="681.90" y="488.52" width="8.100" height="8.100" fill="#ff6a00"/>
<rect x="690.90" y="488.52" width="8.100" height="8.100" fill="#ffab00"/>
<rect x="699.90" y="488.52" width="8.100" height="8.100" fill="#ffc900"/>
<rect x="708.90" y="488.52" width="8.100" height="8.100" fill="#fffb1f"/>
<rect x="717.90" y="488.52" width="8.100" height="8.100" fill="#dcf317"/>
<rect x="726.90" y="488.52" width="8.100" height="8.100" fill="#6dc12b"/>
<rect x="627.90" y="497.45" width="8.100" height="8.100" fill="#00c9ff"/>
<rect x="636.90" y="497.45" width="8.100" height="8.100" fill="#1773ff"/>
<rect x="645.90" y="497.45" width="8.100" height="8.100" fill="#470ff2"/>
<rect x="654.90" y="497.45" width="8.100" height="8.100" fill="#ba17fa"/>
<rect x="663.90" y="497.45" width="8.100" height="8.100" fill="#ed1d6a"/>
<rect x="672.90" y="497.45" width="8.100" height="8.100" fill="#ff4631"/>
<rect x="681.90" y="497.45" width="8.100" height="8.100" fill="#ff7127"/>
<rect x="690.90" y="497.45" width="8.100" height="8.100" fill="#ffa71d"/>
<rect x="699.90" y="497.45" width="8.100" height="8.100" fill="#ffc31c"/>
<rect x="708.90" y="497.45" width="8.100" height="8.100" fill="#fff650"/>
<rect x="717.90" y="497.45" width="8.100" height="8.100" fill="#e9f64e"/>
<rect x="726.90" y="497.45" width="8.100" height="8.100" fill="#8fd94c"/>
<rect x="627.90" y="506.38" width="8.100" height="8.100" fill="#34d2ff"/>
<rect x="636.90" y="506.38" width="8.100" height="8.100" fill="#5b97ff"/>
<rect x="645.90" y="506.38" width="8.100" height="8.100" fill="#7130ff"/>
<rect x="654.90" y="506.38" width="8.100" height="8.100" fill="#cc39ff"/>
<rect x="663.90" y="506.38" width="8.100" height="8.100" fill="#f55d94"/>
<rect x="672.90" y="506.38" width="8.100" height="8.100" fill="#ff776b"/>
<rect x="681.90" y="506.38" width="8.100" height="8.100" fill="#ff9666"/>
<rect x="690.90" y="506.38" width="8.100" height="8.100" fill="#ffbe5f"/>
<rect x="699.90" y="506.38" width="8.100" height="8.100" fill="#ffd35f"/>
<rect x="708.90" y="506.38" width="8.100" height="8.100" fill="#fff881"/>
<rect x="717.90" y="506.38" width="8.100" height="8.100" fill="#f0f981"/>
<rect x="726.90" y="506.38" width="8.100" height="8.100" fill="#aee480"/>
<rect x="627.90" y="515.31" width="8.100" height="8.100" fill="#81e0ff"/>
<rect x="636.90" y="515.31" width="8.100" height="8.100" fill="#97bcff"/>
<rect x="645.90" y="515.31" width="8.100" height="8.100" fill="#a478ff"/>
<rect x="654.90" y="515.31" width="8.100" height="8.100" fill="#de7fff"/>
<rect x="663.90" y="515.31" width="8.100" height="8.100" fill="#fb9abc"/>
<rect x="672.90" y="515.31" width="8.100" height="8.100" fill="#ffa8a1"/>
<rect x="681.90" y="515.31" width="8.100" height="8.100" fill="#ffbb9c"/>
<rect x="690.90" y="515.31" width="8.100" height="8.100" fill="#ffd399"/>
<rect x="699.90" y="515.31" width="8.100" height="8.100" fill="#ffe19a"/>
<rect x="708.90" y="515.31" width="8.100" height="8.100" fill="#fffaac"/>
<rect x="717.90" y="515.31" width="8.100" height="8.100" fill="#f7feb1"/>
<rect x="726.90" y="515.31" width="8.100" height="8.100" fill="#ceefb1"/>
<rect x="627.90" y="524.24" width="8.100" height="8.100" fill="#c2edff"/>
<rect x="636.90" y="524.24" width="8.100" height="8.100" fill="#cbdeff"/>
<rect x="645.90" y="524.24" width="8.100" height="8.100" fill="#d2c0ff"/>
<rect x="654.90" y="524.24" width="8.100" height="8.100" fill="#edc1ff"/>
<rect x="663.90" y="524.24" width="8.100" height="8.100" fill="#ffd1e1"/>
<rect x="672.90" y="524.24" width="8.100" height="8.100" fill="#ffd3d1"/>
<rect x="681.90" y="524.24" width="8.100" height="8.100" fill="#ffddcf"/>
<rect x="690.90" y="524.24" width="8.100" height="8.100" fill="#ffeacd"/>
<rect x="699.90" y="524.24" width="8.100" height="8.100" fill="#fff0ce"/>
<rect x="708.90" y="524.24" width="8.100" height="8.100" fill="#fffdd9"/>
<rect x="717.90" y="524.24" width="8.100" height="8.100" fill="#faffda"/>
<rect x="726.90" y="524.24" width="8.100" height="8.100" fill="#e2f5d6"/>
<rect x="626.900" y="487.700" width="10.400" height="10.400" rx="2" fill="#0aa2da" stroke="#fff" stroke-width="1.400"/>
<rect x="627.100" y="536.200" width="109.100" height="10.500" rx="2.500" fill="#949494"/>
<text x="681.500" y="543.700" text-anchor="middle" font-size="5.800" font-weight="bold" fill="#fff" font-family="Liberation Sans, sans-serif">Show Colors...</text>
</svg>
</div>
</body>
</html>
